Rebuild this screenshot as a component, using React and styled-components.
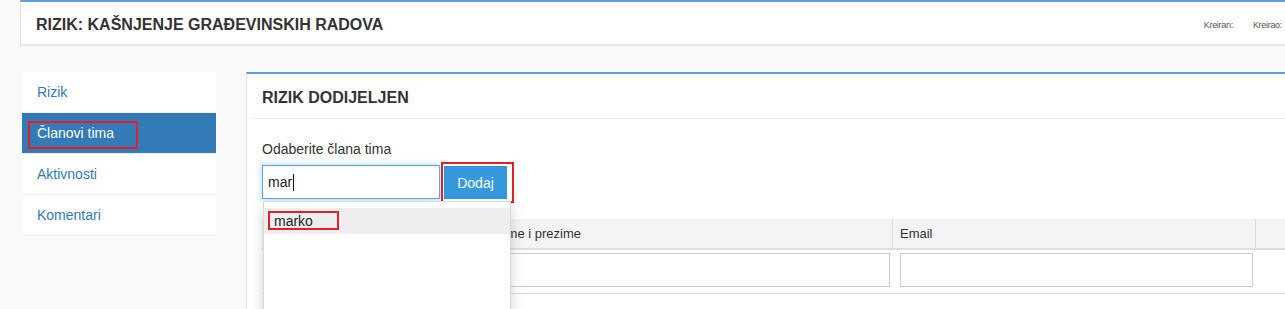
import React from 'react';
import styled, { createGlobalStyle } from 'styled-components';

const GlobalStyle = createGlobalStyle`
  html, body {
    margin: 0;
    padding: 0;
    overflow: hidden;
    background: #f9f9f9;
  }
  body {
    font-family: "Liberation Sans", Arial, sans-serif;
    color: #333;
  }
`;

const Page = styled.div`
  width: 1300px;
  padding-left: 20px;
  box-sizing: border-box;
`;

const TopBar = styled.header`
  display: flex;
  align-items: center;
  justify-content: space-between;
  background: #fff;
  border-top: 2px solid #619be0;
  border-left: 1px solid #dfe5ec;
  border-bottom: 2px solid #e7ebf0;
  padding: 13px 18px 9px 15px;
`;

const Title = styled.h1`
  margin: 0;
  font-size: 16px;
  line-height: 20px;
  font-weight: bold;
  color: #333;
`;

const Meta = styled.div`
  display: flex;
  gap: 20px;
  font-size: 9px;
  letter-spacing: -0.3px;
  color: #555;
`;

const Content = styled.div`
  display: flex;
  align-items: flex-start;
  gap: 30px;
  margin-top: 26px;
`;

const SideNav = styled.ul`
  list-style: none;
  margin: 0 0 0 2px;
  padding: 0;
  width: 194px;
  flex-shrink: 0;
  background: #fff;
`;

const NavItem = styled.li`
  border-bottom: 1px solid #eee;
`;

const NavLink = styled.a`
  display: block;
  padding: 0 15px;
  line-height: 40px;
  font-size: 14px;
  text-decoration: none;
  color: ${p => (p.$active ? '#fff' : '#337ab7')};
  background: ${p => (p.$active ? '#337ab7' : '#fff')};
`;

// red annotation rectangles drawn over the screenshot
const Marked = styled.span`
  position: relative;
  display: inline-block;
  &::after {
    content: "";
    position: absolute;
    top: ${p => p.$t}px;
    right: ${p => p.$r}px;
    bottom: ${p => p.$b}px;
    left: ${p => p.$l}px;
    border: 2px solid #e2202a;
    pointer-events: none;
  }
`;

const Panel = styled.section`
  flex: 1;
  background: #fff;
  border-top: 2px solid #619be0;
  border-left: 1px solid #e3e7ec;
  min-height: 260px;
`;

const PanelHeading = styled.div`
  margin-left: 5px;
  padding: 14px 10px 10px;
  border-bottom: 1px solid #eee;
  h2 {
    margin: 0;
    font-size: 16px;
    line-height: 20px;
    font-weight: bold;
    color: #333;
  }
`;

const PanelBody = styled.div`
  padding: 20px 15px 30px;
`;

const Label = styled.label`
  display: block;
  font-size: 14px;
  line-height: 20px;
  margin-bottom: 6px;
`;

const PickerRow = styled.div`
  position: relative;
  display: flex;
  align-items: flex-start;
`;

const FakeInput = styled.div`
  width: 178px;
  height: 34px;
  box-sizing: border-box;
  display: flex;
  align-items: center;
  padding: 0 5px;
  border: 1px solid #5fa6e3;
  box-shadow: inset 0 1px 1px rgba(0, 0, 0, 0.075), 0 0 6px rgba(102, 175, 233, 0.6);
  font-size: 14px;
  color: #222;
`;

const Caret = styled.span`
  width: 1px;
  height: 17px;
  margin-left: 1px;
  background: #111;
`;

const AddWrap = styled(Marked)`
  margin: 1px 0 0 4px;
`;

const AddButton = styled.button`
  display: block;
  width: 63px;
  height: 33px;
  border: none;
  background: #3498db;
  color: #fff;
  font-family: inherit;
  font-size: 14px;
  padding: 0;
`;

const Dropdown = styled.ul`
  position: absolute;
  top: 36px;
  left: 1px;
  width: 248px;
  height: 150px;
  box-sizing: border-box;
  margin: 0;
  padding: 6px 0;
  list-style: none;
  background: #fff;
  border: 1px solid rgba(0, 0, 0, 0.15);
  box-shadow: 0 6px 12px rgba(0, 0, 0, 0.175);
  z-index: 2;
`;

const DropItem = styled.li`
  padding: 0 10px;
  line-height: 26px;
  font-size: 14px;
  color: #222;
  background: ${p => (p.$active ? '#eee' : 'transparent')};
`;

const Table = styled.table`
  width: 100%;
  margin-top: 20px;
  border-collapse: separate;
  border-spacing: 0;
  table-layout: fixed;
`;

const Th = styled.th`
  background: #f4f4f4;
  text-align: left;
  font-weight: normal;
  font-size: 13px;
  line-height: 29px;
  height: 29px;
  padding: 0 7px;
  color: #333;
  border-bottom: 2px solid #ddd;
  border-right: ${p => (p.$last ? 'none' : '1px solid #ddd')};
`;

const Td = styled.td`
  padding: 3px 3px 6px 7px;
  border-bottom: 1px solid #ddd;
`;

const CellInput = styled.div`
  height: 34px;
  box-sizing: border-box;
  border: 1px solid #ccc;
  background: #fff;
`;

const nav = ['Rizik', 'Članovi tima', 'Aktivnosti', 'Komentari'];

export default function App() {
  return (
    <>
      <GlobalStyle />
      <Page>
        <TopBar>
          <Title>RIZIK: KAŠNJENJE GRAĐEVINSKIH RADOVA</Title>
          <Meta>
            <span>Kreiran:</span>
            <span>Kreirao:</span>
          </Meta>
        </TopBar>

        <Content>
          <SideNav>
            {nav.map(item => (
              <NavItem key={item}>
                {item === 'Članovi tima' ? (
                  <NavLink $active>
                    <Marked $t={8} $b={4} $l={-9} $r={-24}>{item}</Marked>
                  </NavLink>
                ) : (
                  <NavLink>{item}</NavLink>
                )}
              </NavItem>
            ))}
          </SideNav>

          <Panel>
            <PanelHeading>
              <h2>RIZIK DODIJELJEN</h2>
            </PanelHeading>
            <PanelBody>
              <Label>Odaberite člana tima</Label>
              <PickerRow>
                <FakeInput>
                  mar<Caret />
                </FakeInput>
                <AddWrap $t={-4} $b={-4} $l={-3} $r={-7}>
                  <AddButton>Dodaj</AddButton>
                </AddWrap>
                <Dropdown>
                  <DropItem $active>
                    <Marked $t={3} $b={4} $l={-6} $r={-26}>marko</Marked>
                  </DropItem>
                </Dropdown>
              </PickerRow>

              <Table>
                <colgroup>
                  <col style={{ width: 234 }} />
                  <col style={{ width: 397 }} />
                  <col style={{ width: 363 }} />
                  <col />
                </colgroup>
                <thead>
                  <tr>
                    <Th></Th>
                    <Th>Ime i prezime</Th>
                    <Th>Email</Th>
                    <Th $last></Th>
                  </tr>
                </thead>
                <tbody>
                  <tr>
                    <Td><CellInput /></Td>
                    <Td><CellInput /></Td>
                    <Td><CellInput /></Td>
                    <Td></Td>
                  </tr>
                </tbody>
              </Table>
            </PanelBody>
          </Panel>
        </Content>
      </Page>
    </>
  );
}
